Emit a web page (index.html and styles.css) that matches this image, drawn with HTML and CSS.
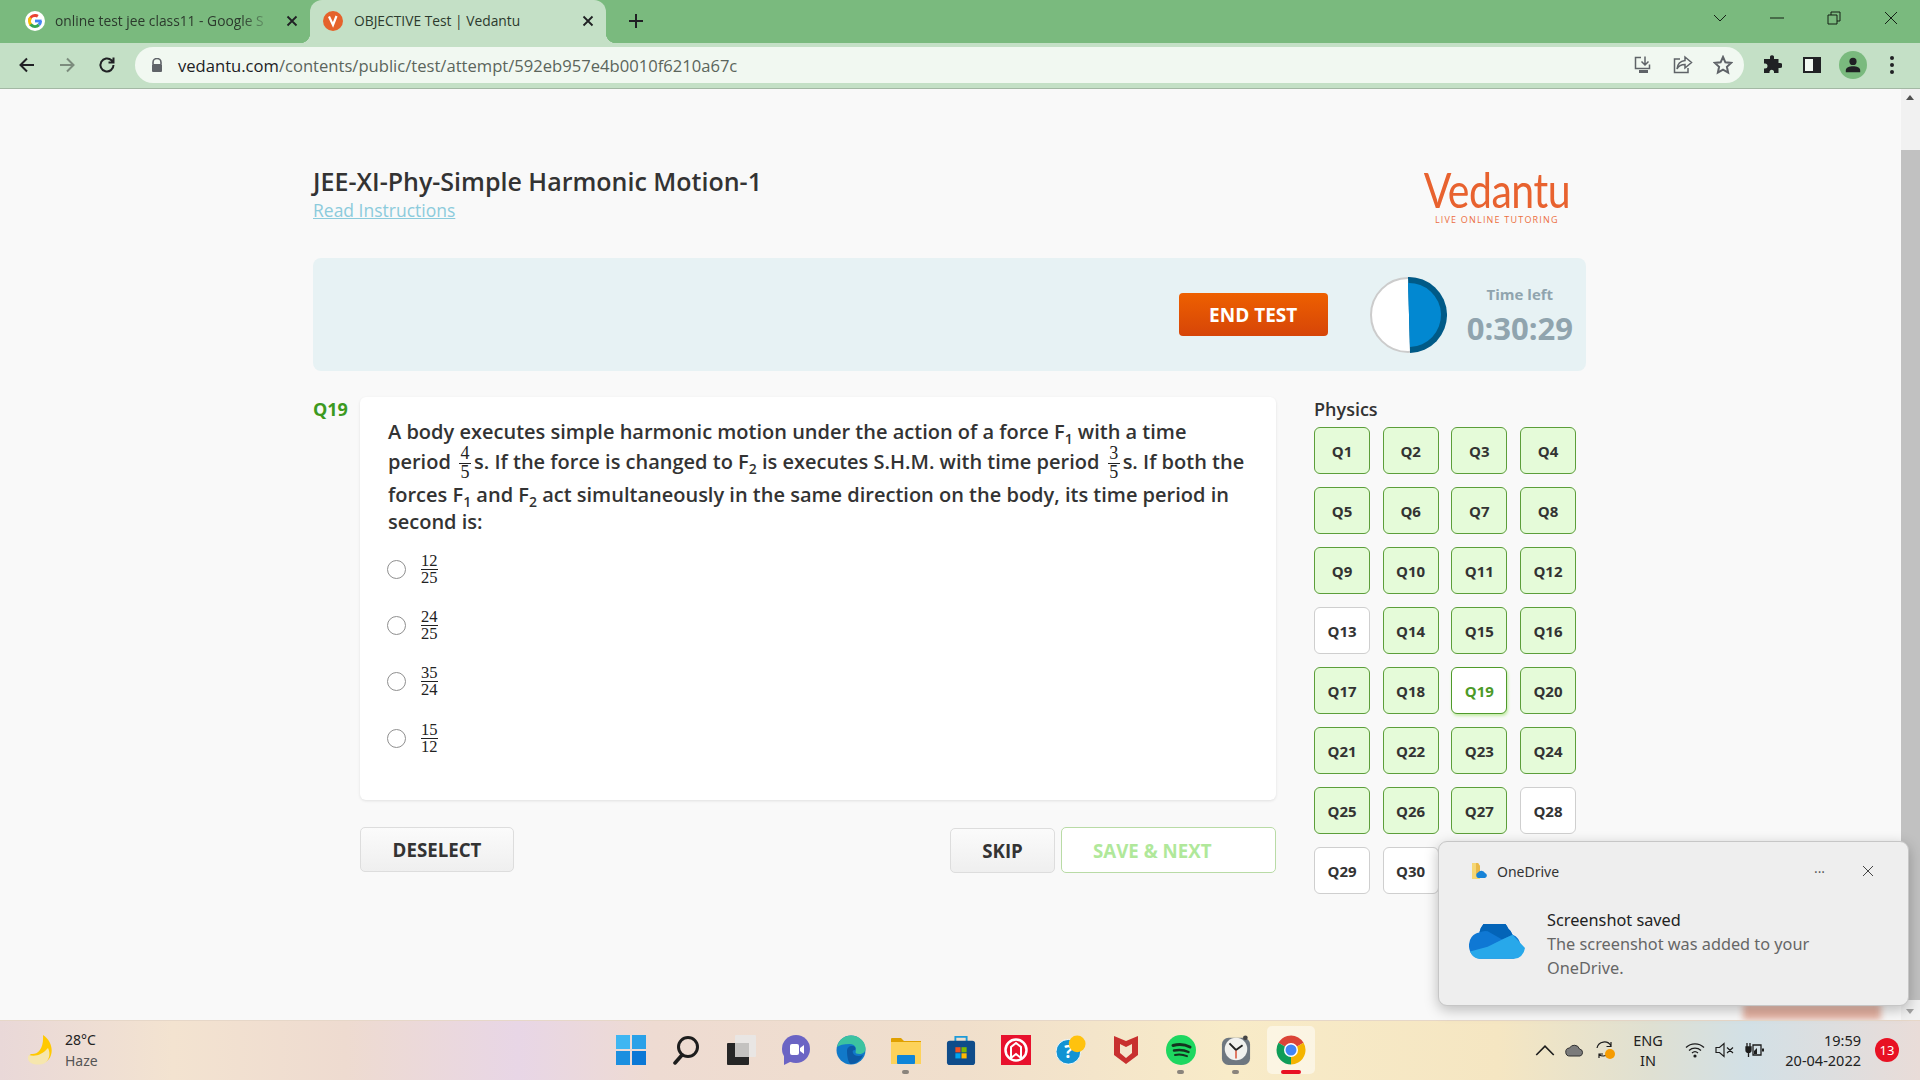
FILE: index.html
```html
<!DOCTYPE html>
<html lang="en">
<head>
<meta charset="UTF-8">
<meta name="viewport" content="width=device-width, initial-scale=1.0">
<title>OBJECTIVE Test | Vedantu</title>
<link rel="stylesheet" href="styles.css">
</head>
<body>

<div class="tabstrip">
  <div class="tab">
    <svg class="favicon" viewBox="0 0 20 20">
      <circle cx="10" cy="10" r="10" fill="#fff"/>
      <g fill="none" stroke-width="3">
        <circle cx="10" cy="10" r="5.5" stroke="#4285f4" pathLength="8" stroke-dasharray="1 7"/>
        <circle cx="10" cy="10" r="5.5" stroke="#ea4335" pathLength="8" stroke-dasharray="2.6 5.4" transform="rotate(185 10 10)"/>
        <circle cx="10" cy="10" r="5.5" stroke="#fbbc05" pathLength="8" stroke-dasharray="1.8 6.2" transform="rotate(135 10 10)"/>
        <circle cx="10" cy="10" r="5.5" stroke="#34a853" pathLength="8" stroke-dasharray="2.2 5.8" transform="rotate(45 10 10)"/>
      </g>
      <rect x="10" y="8.6" width="6.6" height="2.8" fill="#4285f4"/>
    </svg>
    <span class="tab-title fade">online test jee class11 - Google S</span>
    <svg class="tab-close" viewBox="0 0 12 12"><path d="M1.5 1.5l9 9M10.5 1.5l-9 9"/></svg>
  </div>
  <div class="tab active">
    <svg class="favicon" viewBox="0 0 20 20">
      <circle cx="10" cy="10" r="10" fill="#e5622b"/>
      <path d="M6 5.5l4 8.5 3.5-9" fill="none" stroke="#fff" stroke-width="2.2"/>
    </svg>
    <span class="tab-title">OBJECTIVE Test | Vedantu</span>
    <svg class="tab-close" viewBox="0 0 12 12"><path d="M1.5 1.5l9 9M10.5 1.5l-9 9"/></svg>
  </div>
  <svg class="new-tab" viewBox="0 0 16 16"><path d="M8 1v14M1 8h14"/></svg>
  <div class="window-btns">
    <svg viewBox="0 0 14 14"><path d="M1 4l6 6 6-6"/></svg>
    <svg viewBox="0 0 14 14"><path d="M0 7h14"/></svg>
    <svg viewBox="0 0 14 14"><path d="M1 4h9v9H1zM4 4V1h9v9h-3"/></svg>
    <svg viewBox="0 0 14 14"><path d="M1 1l12 12M13 1L1 13"/></svg>
  </div>
</div>

<div class="toolbar">
  <svg class="tool" viewBox="0 0 20 20"><path d="M17 10H4M10 3.5L3.5 10l6.5 6.5"/></svg>
  <svg class="tool off" viewBox="0 0 20 20"><path d="M3 10h13M10 3.5l6.5 6.5-6.5 6.5"/></svg>
  <svg class="tool" viewBox="0 0 20 20"><path d="M16.5 10a6.5 6.5 0 1 1-2-4.7L16.5 7.500M16.500 2.500v5h-5"/></svg>
  <div class="omnibox">
    <svg class="lock" viewBox="0 0 12 14"><path d="M2 6V4.500a4 4 0 0 1 8 0V6" fill="none" stroke="#5f6368" stroke-width="1.600"/><rect y="6" x="1" width="10" height="8" rx="1" fill="#5f6368"/></svg>
    <span class="url"><b>vedantu.com</b>/contents/public/test/attempt/592eb957e4b0010f6210a67c</span>
    <svg class="omni-icon" viewBox="0 0 20 20"><path d="M8 2.500H2.500v11h14v-4M12 1.500v8M8.500 6.500l3.500 3.500 3.500-3.500"/><path d="M6 16.500h9" stroke-width="3"/></svg>
    <svg class="omni-icon" viewBox="0 0 20 20"><path d="M7 4H1.500v13.500H15V13M12 2l6.500 5.500L12 13V9.500C8 9.500 5.500 11 4 14c.5-5 3.500-8 8-8.500z"/></svg>
    <svg class="omni-icon" viewBox="0 0 20 20"><path d="M10 2l2.400 5.300 5.800.6-4.300 3.900 1.200 5.700-5.100-2.900-5.100 2.900 1.200-5.700-4.300-3.900 5.800-.6z" stroke-width="2"/></svg>
  </div>
  <svg class="ext" viewBox="0 0 20 20"><path d="M8 1.500a2.200 2.200 0 0 1 4 0V4h4.500v4H18a2.500 2.500 0 0 1 0 5h-1.500v5H12v-1.500a2.300 2.300 0 0 0-4.500 0V18H2v-4.500h1a2.500 2.500 0 0 0 0-5H2V4h6z" fill="#202124"/></svg>
  <svg class="ext" viewBox="0 0 20 20"><rect x="1" y="2" width="18" height="16" fill="#202124"/><rect x="3" y="4" width="8" height="12" fill="#f1f8f1"/></svg>
  <div class="avatar">
    <svg viewBox="0 0 20 20"><circle cx="10" cy="6" r="4" fill="#202124"/><path d="M2 18v-2c0-3 4-4.500 8-4.500s8 1.500 8 4.500v2z" fill="#202124"/></svg>
  </div>
  <svg class="menu-dots" viewBox="0 0 6 20"><circle cx="3" cy="3" r="2"/><circle cx="3" cy="10" r="2"/><circle cx="3" cy="17" r="2"/></svg>
</div>

<div class="viewport">
  <div class="page">
    <div class="content">
      <div class="head">
        <div>
          <h1>JEE-XI-Phy-Simple Harmonic Motion-1</h1>
          <a class="read-link" href="#">Read Instructions</a>
        </div>
        <div class="logo">
          <div class="logo-word">Vedantu</div>
          <div class="logo-tag">LIVE ONLINE TUTORING</div>
        </div>
      </div>

      <div class="band">
        <button class="end-test">END TEST</button>
        <svg class="timer" viewBox="0 0 78 78">
          <circle cx="39" cy="39" r="37" fill="#fff" stroke="#ccc" stroke-width="2"/>
          <path d="M39 1a38 38 0 0 1 2 76z" fill="#005a87"/>
          <path d="M39 7a32 32 0 0 1 2 64z" fill="#0288d1"/>
        </svg>
        <div class="time-left">
          <div class="time-label">Time left</div>
          <div class="time-value">0:30:29</div>
        </div>
      </div>

      <div class="test-row">
        <div class="q-no">Q19</div>
        <div class="q-col">
          <div class="q-card">
            <p class="q-text">A body executes simple harmonic motion under the action of a force F<sub>1</sub> with a time period <span class="frac small"><span>4</span><span>5</span></span>s. If the force is changed to F<sub>2</sub> is executes S.H.M. with time period <span class="frac small"><span>3</span><span>5</span></span>s. If both the forces F<sub>1</sub> and F<sub>2</sub> act simultaneously in the same direction on the body, its time period in second is:</p>
            <div class="option"><span class="radio"></span><span class="frac"><span>12</span><span>25</span></span></div>
            <div class="option"><span class="radio"></span><span class="frac"><span>24</span><span>25</span></span></div>
            <div class="option"><span class="radio"></span><span class="frac"><span>35</span><span>24</span></span></div>
            <div class="option"><span class="radio"></span><span class="frac"><span>15</span><span>12</span></span></div>
          </div>
          <div class="actions">
            <button class="btn deselect">DESELECT</button>
            <div class="actions-right">
              <button class="btn skip">SKIP</button>
              <button class="save-next">SAVE &amp; NEXT</button>
            </div>
          </div>
        </div>
        <div class="palette">
          <div class="palette-title">Physics</div>
          <div class="q-grid">
            <div class="q-btn done">Q1</div>
            <div class="q-btn done">Q2</div>
            <div class="q-btn done">Q3</div>
            <div class="q-btn done">Q4</div>
            <div class="q-btn done">Q5</div>
            <div class="q-btn done">Q6</div>
            <div class="q-btn done">Q7</div>
            <div class="q-btn done">Q8</div>
            <div class="q-btn done">Q9</div>
            <div class="q-btn done">Q10</div>
            <div class="q-btn done">Q11</div>
            <div class="q-btn done">Q12</div>
            <div class="q-btn">Q13</div>
            <div class="q-btn done">Q14</div>
            <div class="q-btn done">Q15</div>
            <div class="q-btn done">Q16</div>
            <div class="q-btn done">Q17</div>
            <div class="q-btn done">Q18</div>
            <div class="q-btn current">Q19</div>
            <div class="q-btn done">Q20</div>
            <div class="q-btn done">Q21</div>
            <div class="q-btn done">Q22</div>
            <div class="q-btn done">Q23</div>
            <div class="q-btn done">Q24</div>
            <div class="q-btn done">Q25</div>
            <div class="q-btn done">Q26</div>
            <div class="q-btn done">Q27</div>
            <div class="q-btn">Q28</div>
            <div class="q-btn">Q29</div>
            <div class="q-btn">Q30</div>
          </div>
        </div>
      </div>
    </div>
    <div class="peek"></div>
  </div>
  <div class="scrollbar">
    <div class="arrow up"></div>
    <div class="thumb"></div>
    <div class="arrow down"></div>
  </div>

  <div class="toast">
    <div class="toast-head">
      <svg class="toast-app" viewBox="0 0 18 18">
        <path d="M2 1h6l2 3v13H2z" fill="#f6d774"/>
        <path d="M6 1h2l2 3v9H6z" fill="#e9b949"/>
        <path d="M8 16a3 3 0 0 1 0-5.500 4 4 0 0 1 7 .5 2.600 2.600 0 0 1 0 5z" fill="#1683d8"/>
      </svg>
      <span class="toast-name">OneDrive</span>
      <span class="toast-more">···</span>
      <svg class="toast-close" viewBox="0 0 12 12"><path d="M1 1l10 10M11 1L1 11"/></svg>
    </div>
    <div class="toast-body">
      <svg class="toast-cloud" viewBox="1 3 54 30" preserveAspectRatio="none">
        <path d="M13 32a11 11 0 0 1-2-22 15 15 0 0 1 28-3 10 10 0 0 1 4 5 10.500 10.500 0 0 1 1 20z" fill="#0f78d4"/>
        <path d="M11 10a15 15 0 0 1 28-3 10 10 0 0 1 4 5l-10 4-14-7a13 13 0 0 0-8 1z" fill="#0364b8"/>
        <path d="M2 26a11 11 0 0 0 11 6h31a10.500 10.500 0 0 0 11-9L43 12 33 16 19 22z" fill="#28a8ea"/>
      </svg>
      <div>
        <div class="toast-title">Screenshot saved</div>
        <div class="toast-msg">The screenshot was added to your OneDrive.</div>
      </div>
    </div>
  </div>
</div>

<div class="taskbar">
  <div class="weather">
    <svg class="moon" viewBox="0 0 26 32">
      <path d="M16 1c9 6 11 17 6 24-4 5-12 6-18 3-3-2-3-6 0-8 6 1 13-4 12-19z" fill="#ffc900"/>
      <path d="M2 21c6 2 13 0 19-7 3 6 1 12-3 15-4 2-10 2-14 0-3-2-4-5-2-8z" fill="#f6e6ae"/>
    </svg>
    <div>
      <div class="temp">28°C</div>
      <div class="cond">Haze</div>
    </div>
  </div>

  <div class="apps">
    <div class="app">
      <svg viewBox="0 0 30 30">
        <rect width="14" height="14" fill="#3fb6f2"/><rect x="16" width="14" height="14" fill="#2aa1e8"/>
        <rect y="16" width="14" height="14" fill="#1b8fe0"/><rect x="16" y="16" width="14" height="14" fill="#0a78d6"/>
      </svg>
    </div>
    <div class="app">
      <svg viewBox="0 0 30 30"><circle cx="17" cy="12" r="9.500" fill="none" stroke="#1d1d1d" stroke-width="3"/><path d="M11 20l-7 8" stroke="#1d1d1d" stroke-width="3.500" stroke-linecap="round"/></svg>
    </div>
    <div class="app">
      <svg viewBox="0 0 30 30"><rect x="9" y="0" width="21" height="22" rx="1" fill="#e9e6e4"/><rect x="1" y="8" width="22" height="22" rx="1" fill="#262626"/><rect x="9" y="8" width="14" height="14" fill="#c4c2c0"/></svg>
    </div>
    <div class="app">
      <svg viewBox="0 0 30 30"><ellipse cx="15" cy="14" rx="14" ry="14" fill="#6b64c4"/><path d="M3 20v10l8-4z" fill="#6b64c4"/><rect x="9" y="9" width="9" height="11" rx="2" fill="#fff"/><path d="M19 13l4-3v9l-4-3z" fill="#fff"/></svg>
    </div>
    <div class="app">
      <svg viewBox="0 0 30 30">
        <circle cx="15" cy="15" r="14.500" fill="#1179c9"/>
        <path d="M1 12C3 4 9 .5 15 .5c8 0 14.500 6 14.500 13 0 3-2 5.500-6 5.500-3 0-4-1-4-2 1-2 1-8-6-8-6 0-10 1-12.500 3z" fill="#3cc3a0"/>
        <path d="M11 16c0-3 2-5 5-5s4 2 3 4c-2 0-3 1-2 3 1 3 6 4 10 2-2 5-7 9-12 9-2 0-4-6-4-13z" fill="#0c59a4"/>
      </svg>
    </div>
    <div class="app running">
      <svg viewBox="0 0 30 30"><path d="M0 4a1 1 0 0 1 1-1h9l3 3h17v4H0z" fill="#e0a000"/><path d="M0 7h30v22H0z" fill="#fdd25a"/><rect x="6" y="20" width="18" height="9" rx="1" fill="#0f85d8"/></svg>
    </div>
    <div class="app">
      <svg viewBox="0 0 30 32"><path d="M9 7V2h12v5" fill="none" stroke="#1e9bd8" stroke-width="2"/><rect y="6" width="30" height="26" rx="3" fill="#0f4c8a"/><rect x="9" y="13" width="5.500" height="5.500" fill="#f25022"/><rect x="15.500" y="13" width="5.500" height="5.500" fill="#7fba00"/><rect x="9" y="19.500" width="5.500" height="5.500" fill="#00a4ef"/><rect x="15.500" y="19.500" width="5.500" height="5.500" fill="#ffb900"/></svg>
    </div>
    <div class="app">
      <svg viewBox="0 0 30 30"><rect width="30" height="30" fill="#e8112d"/><circle cx="15" cy="15" r="10.500" fill="none" stroke="#fff" stroke-width="2.500"/><path d="M10 23V12l5-4 5 4v11l-5-4z" fill="none" stroke="#fff" stroke-width="2"/></svg>
    </div>
    <div class="app">
      <svg viewBox="0 0 34 34"><circle cx="14" cy="19" r="14" fill="#1293d3" stroke="#fff" stroke-width="1"/><text class="help-q" x="14" y="26" text-anchor="middle">?</text><circle cx="24" cy="10" r="9.500" fill="#ffc20e"/></svg>
    </div>
    <div class="app">
      <svg viewBox="0 0 30 30"><path d="M3 1l12 5 12-5v19L15 29 3 20z" fill="#c8302f"/><path d="M9 9l6 3 6-3v9l-6 5-6-5z" fill="#f4e6cc"/></svg>
    </div>
    <div class="app running">
      <svg viewBox="0 0 30 30"><circle cx="15" cy="15" r="15" fill="#1ed760"/><g fill="none" stroke="#14331f" stroke-linecap="round"><path d="M7 10.500c6-1.500 12-1 17 1.500" stroke-width="3"/><path d="M8 15.500c5-1 10-.7 14.500 1.500" stroke-width="2.500"/><path d="M9 20c4-.8 8-.5 12 1.200" stroke-width="2"/></g></svg>
    </div>
    <div class="app running">
      <svg viewBox="0 0 30 32"><rect x="0" y="3" width="30" height="29" rx="7" fill="#6e7780"/><circle cx="15" cy="15" r="12" fill="#f1f1ee"/><path d="M15 16V25" stroke="#d9482b" stroke-width="1.500"/><path d="M15 16L8 9M15 16l7-5" stroke="#222" stroke-width="2"/><circle cx="25" cy="3" r="2.500" fill="#444"/></svg>
    </div>
    <div class="app pinned">
      <svg viewBox="0 0 30 30">
        <g fill="none" stroke-width="9">
          <circle cx="15" cy="15" r="10" stroke="#db4437" pathLength="3" stroke-dasharray="1 2" transform="rotate(210 15 15)"/>
          <circle cx="15" cy="15" r="10" stroke="#f4b400" pathLength="3" stroke-dasharray="1 2" transform="rotate(330 15 15)"/>
          <circle cx="15" cy="15" r="10" stroke="#0f9d58" pathLength="3" stroke-dasharray="1 2" transform="rotate(90 15 15)"/>
        </g>
        <circle cx="15" cy="15" r="7" fill="#fff"/><circle cx="15" cy="15" r="5.500" fill="#4285f4"/>
      </svg>
    </div>
  </div>

  <div class="tray">
    <div class="tray-cell"><svg viewBox="0 0 16 16"><path d="M1 12l7-7 7 7" fill="none" stroke="#1d1d1d" stroke-width="1.300"/></svg></div>
    <div class="tray-cell"><svg viewBox="0 0 20 16"><path d="M5 14a4 4 0 0 1-.500-8 5.500 5.500 0 0 1 10 1 3.600 3.600 0 0 1 .500 7z" fill="#7b7b7b" stroke="#333" stroke-width="1"/></svg></div>
    <div class="tray-cell"><svg viewBox="0 0 20 20"><path d="M2 8a7.500 7.500 0 0 1 14-2M16 2v4.500h-4.500M14 13l-1 1a7 7 0 0 1-9 .5M4 18v-4h4" fill="none" stroke="#1d1d1d" stroke-width="1.200"/><circle cx="15" cy="14" r="5" fill="#f59b00"/></svg></div>
    <div class="lang">ENG<br>IN</div>
    <div class="tray-cell"><svg viewBox="0 0 20 16"><g fill="none" stroke="#1d1d1d" stroke-width="1.300"><path d="M1 5.500a13 13 0 0 1 18 0"/><path d="M4 8.500a9 9 0 0 1 12 0"/><path d="M7 11a4.500 4.500 0 0 1 6 0"/></g><circle cx="10" cy="14" r="1.600" fill="#1d1d1d"/></svg></div>
    <div class="tray-cell"><svg viewBox="0 0 20 16"><path d="M1 5.500h3.500L9 1.500v13l-4.500-4H1zM12 5.500l6 5.500M18 5.500l-6 5.500" fill="none" stroke="#1d1d1d" stroke-width="1.200"/></svg></div>
    <div class="tray-cell"><svg viewBox="0 0 20 16"><path d="M2 1v4M5 1v4M1 5h5v3a2.500 2.500 0 0 1-5 0zM3.500 10v5" stroke="#1d1d1d" stroke-width="1.300" fill="#1d1d1d"/><path d="M8 3h8v10H8z" fill="none" stroke="#1d1d1d" stroke-width="1.300"/><path d="M9 12V9l3-3v6z" fill="#1d1d1d"/><rect x="17" y="6.500" width="2" height="3" fill="#1d1d1d"/></svg></div>
    <div class="clock">19:59<br>20-04-2022</div>
    <div class="badge">13</div>
  </div>
</div>

</body>
</html>
```

FILE: styles.css
```css
* {
  box-sizing: border-box;
}

body {
  margin: 0;
  height: 100vh;
  overflow: hidden;
  display: flex;
  flex-direction: column;
  background: #f9f9f9;
  font-family: 'Open Sans', sans-serif;
  color: #333;
}

/* browser chrome */
.tabstrip {
  height: 43px;
  background: #7aba7e;
  display: flex;
  align-items: flex-end;
  flex-shrink: 0;
}

.tab {
  width: 310px;
  height: 43px;
  display: flex;
  align-items: center;
  padding: 0 12px 2px 25px;
  font-size: 13.800px;
  color: #2c3a2d;
  position: relative;
}

.tab.active {
  width: 296px;
  padding-left: 13px;
  background: #c4e0c6;
  border-radius: 12px 12px 0 0;
}

.tab.active::before,
.tab.active::after {
  content: '';
  position: absolute;
  bottom: 0;
  width: 10px;
  height: 10px;
}
.tab.active::before {
  left: -10px;
  background: radial-gradient(circle at 0 0, transparent 10px, #c4e0c6 10.5px);
}
.tab.active::after {
  right: -10px;
  background: radial-gradient(circle at 100% 0, transparent 10px, #c4e0c6 10.5px);
}

.favicon {
  width: 20px;
  height: 20px;
  flex-shrink: 0;
  margin-right: 11px;
}

.tab:first-child .favicon {
  margin-right: 10px;
}

.tab-title {
  flex: 1;
  white-space: nowrap;
  overflow: hidden;
}

.tab-title.fade {
  -webkit-mask-image: linear-gradient(90deg, #000 85%, transparent 100%);
  mask-image: linear-gradient(90deg, #000 85%, transparent 100%);
}

.tab-close {
  width: 12px;
  height: 12px;
  margin-left: 12px;
  flex-shrink: 0;
  fill: none;
  stroke: #202124;
  stroke-width: 1.800;
}

.new-tab {
  width: 16px;
  height: 16px;
  margin: 0 0 14px 22px;
  fill: none;
  stroke: #202124;
  stroke-width: 2;
}

.window-btns {
  margin-left: auto;
  display: flex;
  align-items: center;
  gap: 43px;
  padding: 0 22px 7px 0;
  height: 43px;
}

.window-btns svg {
  width: 14px;
  height: 14px;
  fill: none;
  stroke: #142015;
  stroke-width: 1;
}

.toolbar {
  height: 46px;
  flex-shrink: 0;
  background: #c4e0c6;
  border-bottom: 1px solid #a3b8a4;
  display: flex;
  align-items: center;
  padding: 0 0 1px 17px;
}

.tool {
  width: 20px;
  height: 20px;
  margin-right: 20px;
  fill: none;
  stroke: #202124;
  stroke-width: 2;
}
.tool.off {
  stroke: #7c8c7d;
}
.tool:nth-child(3) {
  margin-right: 18px;
}

.omnibox {
  width: 1609px;
  height: 36px;
  border-radius: 18px;
  background: #f1f8f1;
  display: flex;
  align-items: center;
  padding: 0 11px 0 16px;
}

.lock {
  width: 12px;
  height: 14px;
  margin-right: 15px;
}

.url {
  flex: 1;
  font-size: 16.600px;
  color: #5b655c;
  white-space: nowrap;
}
.url b {
  font-weight: 400;
  color: #202124;
}

.omni-icon {
  width: 20px;
  height: 20px;
  margin-left: 20px;
  fill: none;
  stroke: #5f6368;
  stroke-width: 1.500;
}

.ext {
  width: 20px;
  height: 20px;
  margin-left: 18px;
}
.ext + .ext {
  margin-left: 20px;
}

.avatar {
  width: 28px;
  height: 28px;
  margin-left: 17px;
  border-radius: 50%;
  background: #7aba7e;
  display: flex;
  align-items: center;
  justify-content: center;
}
.avatar svg {
  width: 18px;
  height: 18px;
}

.menu-dots {
  width: 6px;
  height: 20px;
  margin-left: 22px;
  fill: #202124;
}

/* page */
.viewport {
  flex: 1;
  display: flex;
  position: relative;
  min-height: 0;
}

.page {
  flex: 1;
  position: relative;
  overflow: hidden;
}

.content {
  width: 1273px;
  margin-left: 313px;
  padding-top: 75px;
}

.head {
  display: flex;
  justify-content: space-between;
  height: 94px;
}

h1 {
  margin: 0;
  font-size: 25px;
  line-height: 34px;
  font-weight: 600;
  color: #333;
}

.read-link {
  display: block;
  font-size: 17.500px;
  line-height: 24px;
  color: #8ccbdc;
  text-decoration: underline;
}

.logo {
  margin-right: 16px;
  text-align: center;
  color: #e8622f;
}

.logo-word {
  height: 49px;
  font-family: 'Lato', sans-serif;
  font-size: 41px;
  line-height: 44px;
  letter-spacing: -0.500px;
  transform: scaleY(1.2);
  transform-origin: 50% 0;
}

.logo-tag {
  font-size: 9px;
  letter-spacing: 1.200px;
  line-height: 14px;
  color: #ec6f42;
  font-weight: 500;
}

.band {
  height: 113px;
  background: #e7f2f4;
  border-radius: 8px;
  display: flex;
  align-items: center;
  padding-right: 13px;
}

.end-test {
  margin-left: auto;
  width: 149px;
  height: 43px;
  border: none;
  border-radius: 4px;
  background: linear-gradient(#ee6000, #d64508);
  color: #fff;
  font-family: inherit;
  font-size: 19px;
  font-weight: 700;
}

.timer {
  width: 78px;
  height: 78px;
  margin-left: 41px;
}

.time-left {
  margin-left: 20px;
  padding-top: 4px;
  text-align: center;
  color: #90a4ae;
  font-weight: 700;
}

.time-label {
  font-size: 15px;
  line-height: 20px;
  margin-bottom: 3px;
}

.time-value {
  font-size: 31px;
  line-height: 42px;
}

.test-row {
  display: flex;
  margin-top: 26px;
  align-items: flex-start;
}

.q-no {
  width: 47px;
  font-size: 18px;
  line-height: 24px;
  font-weight: 700;
  color: #3d9a1f;
}

.q-col {
  width: 916px;
}

.q-card {
  height: 403px;
  background: #fff;
  border-radius: 6px;
  box-shadow: 0 1px 3px rgba(0, 0, 0, 0.1);
  padding: 21px 27px 0;
}

.q-text {
  margin: 0 0 6px;
  padding-left: 1px;
  font-size: 20px;
  line-height: 27px;
  font-weight: 560;
  color: #333;
}

.q-text sub {
  font-size: 14px;
  line-height: 0;
}

.frac {
  display: inline-flex;
  flex-direction: column;
  align-items: stretch;
  text-align: center;
  vertical-align: middle;
  font-family: 'Liberation Serif', serif;
  font-size: 16.500px;
  line-height: 16px;
  font-weight: 400;
  color: #222;
}

.frac span:first-child {
  border-bottom: 1px solid #222;
}

.frac.small {
  margin: 0 3px 0 3px;
  font-size: 18px;
  line-height: 17.500px;
  width: 12px;
  vertical-align: 10px;
}

.option {
  height: 56.300px;
  display: flex;
  align-items: center;
}

.radio {
  width: 19px;
  height: 19px;
  border: 1px solid #8f8f8f;
  border-radius: 50%;
  margin-right: 15px;
  background: #fff;
}

.actions {
  display: flex;
  justify-content: space-between;
  align-items: flex-start;
  margin-top: 27px;
}

.actions-right {
  display: flex;
  gap: 6px;
  align-items: flex-start;
}

.btn {
  height: 45px;
  border: 1px solid #ddd;
  border-radius: 5px;
  background: linear-gradient(#fbfbfb, #efefef);
  font-family: inherit;
  font-size: 18.700px;
  font-weight: 700;
  color: #333;
}

.deselect {
  width: 154px;
}

.skip {
  width: 105px;
  margin-top: 1px;
}

.save-next {
  width: 215px;
  height: 46px;
  background: #fff;
  border: 1px solid #b9dba6;
  border-radius: 5px;
  padding-left: 31px;
  text-align: left;
  font-family: inherit;
  font-size: 18.700px;
  font-weight: 700;
  color: #b0e89a;
}

.palette {
  margin-left: 38px;
}

.palette-title {
  font-size: 18px;
  line-height: 24px;
  font-weight: 600;
  margin-bottom: 6px;
}

.q-grid {
  display: grid;
  grid-template-columns: repeat(4, 56px);
  grid-auto-rows: 47px;
  column-gap: 12.670px;
  row-gap: 13px;
}

.q-btn {
  display: flex;
  align-items: center;
  justify-content: center;
  background: #fff;
  border: 1px solid #cfcfcf;
  border-radius: 6px;
  font-size: 15px;
  font-weight: 700;
  color: #333;
}

.q-btn.done {
  background: #e5fbd9;
  border-color: #5c9e3a;
}

.q-btn.current {
  border-color: #4f9a2a;
  color: #4c9a28;
  box-shadow: 1px 2px 3px #c4eca8;
}

/* the red button that shows behind the notification */
.peek {
  position: absolute;
  left: 1743px;
  bottom: 0;
  width: 138px;
  height: 16px;
  background: #e6b3a3;
  filter: blur(3px);
}

.scrollbar {
  width: 19px;
  flex-shrink: 0;
  background: #f1f1f1;
  display: flex;
  flex-direction: column;
  align-items: center;
}

.arrow {
  height: 17px;
  width: 100%;
  position: relative;
}
.arrow::after {
  content: '';
  position: absolute;
  left: 5px;
  top: 6px;
  border-left: 4px solid transparent;
  border-right: 4px solid transparent;
}
.arrow.up::after {
  border-bottom: 5px solid #505050;
}
.arrow.down::after {
  border-top: 5px solid #a3a3a3;
}

.thumb {
  width: 100%;
  height: 850px;
  margin: 44px 0 3px;
  background: #c1c1c1;
}

/* onedrive notification */
.toast {
  position: absolute;
  left: 1438px;
  top: 752px;
  width: 471px;
  height: 165px;
  background: #eeeeee;
  border: 1px solid #c6c6c6;
  border-radius: 9px;
  box-shadow: 0 4px 14px rgba(0, 0, 0, 0.25);
  padding: 18px 34px 0 31px;
}

.toast-head {
  display: flex;
  align-items: center;
  height: 22px;
}

.toast-app {
  width: 18px;
  height: 18px;
  margin-right: 9px;
}

.toast-name {
  flex: 1;
  font-family: 'Noto Sans', sans-serif;
  font-size: 14px;
  color: #333;
}

.toast-more {
  font-size: 14px;
  color: #555;
  margin-right: 37px;
}

.toast-close {
  width: 12px;
  height: 12px;
  fill: none;
  stroke: #444;
  stroke-width: 1;
}

.toast-body {
  display: flex;
  margin-top: 27px;
}

.toast-cloud {
  width: 56px;
  height: 36px;
  margin: 15px 22px 0 -1px;
  flex-shrink: 0;
}

.toast-title {
  font-family: 'Noto Sans', sans-serif;
  font-size: 16.300px;
  line-height: 23px;
  color: #222;
}

.toast-msg {
  width: 290px;
  font-family: 'Noto Sans', sans-serif;
  font-size: 16.300px;
  line-height: 24px;
  color: #666;
}

/* windows taskbar */
.taskbar {
  height: 60px;
  flex-shrink: 0;
  border-top: 1px solid #e6d7c8;
  background: linear-gradient(90deg, #e9d8d8 0, #f3e3d0 9%, #eedbd0 18%, #e8d6e6 27%, #eedbd2 34%, #f0dfcc 50%, #f8ebc8 64%, #f5e6c2 78%, #dfe0d2 86%, #d2e0e6 91%, #e9dcd8 100%);
  display: flex;
  align-items: center;
  padding-bottom: 2px;
  font-family: 'Noto Sans', sans-serif;
}

.weather {
  width: 603px;
  display: flex;
  align-items: center;
  padding-left: 27px;
  font-size: 14px;
  line-height: 21px;
}

.moon {
  width: 26px;
  height: 32px;
  margin-right: 12px;
}

.temp {
  color: #222;
}

.cond {
  color: #555;
}

.apps {
  display: flex;
}

.app {
  width: 55px;
  height: 48px;
  display: flex;
  align-items: center;
  justify-content: center;
  position: relative;
  border-radius: 5px;
}

.app svg {
  width: 30px;
  height: 30px;
}

.app.running::after,
.app.pinned::after {
  content: '';
  position: absolute;
  bottom: 0;
  left: 24px;
  width: 7px;
  height: 4px;
  border-radius: 2px;
  background: #8a847c;
}

.app.pinned {
  width: 48px;
  margin-left: 4px;
  background: rgba(255, 255, 255, 0.5);
}
.app.pinned::after {
  left: 14px;
  width: 20px;
  background: #e81123;
}

.help-q {
  font-family: 'Open Sans', sans-serif;
  font-size: 20px;
  font-weight: 700;
  fill: #fff;
}

.tray {
  margin-left: auto;
  display: flex;
  align-items: center;
  font-size: 14.500px;
  line-height: 20px;
  color: #222;
  padding-right: 21px;
}

.tray-cell {
  width: 30px;
  display: flex;
  justify-content: center;
}

.tray-cell svg {
  width: 20px;
  height: 20px;
}

.lang {
  width: 56px;
  text-align: center;
  margin-right: 4px;
}

.clock {
  width: 91px;
  text-align: right;
}

.badge {
  width: 24px;
  height: 24px;
  margin-left: 14px;
  border-radius: 50%;
  background: #e81123;
  color: #fff;
  font-size: 13px;
  line-height: 24px;
  text-align: center;
}
```
